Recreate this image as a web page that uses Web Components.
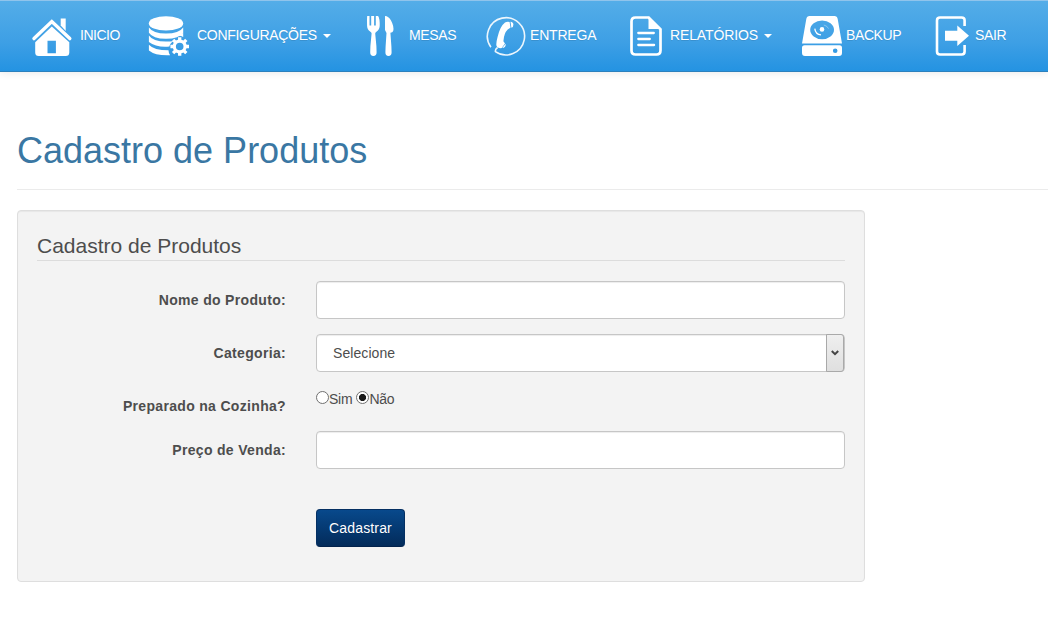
<!DOCTYPE html>
<html lang="pt-BR">
<head>
<meta charset="utf-8">
<title>Cadastro de Produtos</title>
<style>
    body {
        margin: 0;
        background: #fff;
        color: #4d4d4d;
        font: 14px/20px "Liberation Sans", Arial, sans-serif;
        overflow: hidden;
    }
</style>
</head>
<body>
<app-navbar>
    <nav-item icon="home" style="--gap: 8px; --w: 116px; --track: -.5px">INICIO</nav-item>
    <nav-item icon="database" caret style="--gap: 9px; --w: 212px; --track: -.3px">CONFIGURAÇÕES</nav-item>
    <nav-item icon="cutlery" style="--gap: 9px; --w: 126px; --track: -.35px">MESAS</nav-item>
    <nav-item icon="phone" style="--gap: 4px; --w: 140px; --track: -.2px">ENTREGA</nav-item>
    <nav-item icon="report" caret style="--gap: 4px; --w: 176px; --track: -.12px">RELATÓRIOS</nav-item>
    <nav-item icon="disk" style="--gap: 4px; --w: 129px; --track: -.4px">BACKUP</nav-item>
    <nav-item icon="exit" style="--gap: 4px; --w: 80px; --track: -.35px">SAIR</nav-item>
</app-navbar>
<page-header>Cadastro de Produtos</page-header>
<form-panel>
    <span slot="legend">Cadastro de Produtos</span>
    <form-row label="Nome do Produto:"><text-field></text-field></form-row>
    <form-row label="Categoria:"><select-field value="Selecione"></select-field></form-row>
    <form-row label="Preparado na Cozinha?">
        <radio-option>Sim</radio-option><radio-option checked>Não</radio-option>
    </form-row>
    <form-row label="Preço de Venda:"><text-field></text-field></form-row>
    <submit-button slot="actions">Cadastrar</submit-button>
</form-panel>

<script>
const icons = {
    home: `
        <path d="M28.7 9.5V2.6h5V15z"/>
        <path d="M2 22.6 19.8 5.6l18 17" fill="none" stroke="#fff" stroke-width="3.4" stroke-linecap="round"/>
        <path fill-rule="evenodd" d="M19.8 10.6 3.2 26.2v10.3q0 3.5 3.5 3.5h27q3.6 0 3.6-3.5V26.2zM15.5 24.8h8.4v12.4h-8.4z"/>`,
    database: `
        <ellipse cx="18" cy="7.4" rx="17.2" ry="7.2"/>
        <path d="M.9 11.5q4 6 17.1 6t17.2-6v5.2q-4 6-17.2 6t-17.1-6z"/>
        <path d="M.9 19.6q4 6 17.1 6 4.4 0 8-.7-4.2 2-4.6 5.6-13 1.2-20.5-4.5z"/>
        <path d="M.9 28.7q5 5.6 19.6 5.6.2 3.6 1.6 5Q7.5 39.9.9 34.5z"/>
        <path d="M29 19.8q3.5-1 6.2-3.1v4.2q-2-1.3-6.2-1.1z"/>
        <circle cx="31.7" cy="30.5" r="5.4" fill="none" stroke="#fff" stroke-width="3.2"/>
        <g stroke="#fff" stroke-width="3.3">
            <path d="M31.7 21.2v3.5M31.7 36.3v3.5M22.4 30.5h3.5M37.5 30.5H41M25.1 23.9l2.5 2.5M35.8 34.6l2.5 2.5M25.1 37.1l2.5-2.5M35.8 26.4l2.5-2.5"/>
        </g>`,
    cutlery: `
        <path d="M7.2 0h2.3v9.5h1.7V0h2.9v9.5h1.7V0h2.3q1.8 2.5 1.6 10-.3 4-3 5.4-1.5.8-1.5 2l1.2 12.6.2 6.2q0 3.8-3.2 3.8t-3.2-3.8l.2-6.2 1.2-12.6q0-1.2-1.5-2-2.8-1.4-3-5.4-.2-7.5.1-10z"/>
        <path d="M25 0q3.5 0 6 4.5 3.3 6 2.2 10.6-.6 1.7-2.8 1.7l1 13.7.2 5.7q0 3.8-3.1 3.8t-3.1-3.8l.2-5.7L26.5 17 25 14z"/>`,
    phone: `
        <path d="M4.9 31.2A18.6 18.6 0 1 1 9.4 35.6Q9 33.2 11.6 31.5" fill="none" stroke="#fff" stroke-width="1.6" stroke-opacity=".9"/>
        <path d="M19 6.4q2.2-1.2 4.6-.5l.9 5.6-2.8 2.1q-3.7 3.6-4.3 11.6l1.6 2.3-3.3 4.6q-4.4.4-5.3-2.6-.4-2.7 1.1-8.2 2.4-11 7.5-14.9z"/>
        <path d="M24.5 5.7q2.9.4 2.9 2.8 0 2.8-2 3.2zM19.6 27.8q.6 3.7-3.4 4.3z"/>`,
    report: `
        <path d="M22.7 1.5H9.5q-4 0-4 4v29q0 4 4 4h21q4 0 4-4V13.3z" fill="none" stroke="#fff" stroke-width="2.7"/>
        <path d="M22.5.6V13h12.8z"/>
        <path d="M12.3 17h15.5M12.3 23h11.5M12.3 29h15.8" stroke="#fff" stroke-width="2.3" stroke-linecap="round"/>`,
    disk: `
        <path fill-rule="evenodd" d="M7.6 0h24.8q2.8 0 3.3 3L40 27.6H0L4.3 3Q4.8 0 7.6 0zM8.2 13.8a11.9 9.4 0 1 0 23.8 0a11.9 9.4 0 1 0-23.8 0z"/>
        <circle cx="20" cy="13.4" r="2.3"/>
        <path d="M12.8 12.6q.6 5.6 6.2 6.3" fill="none" stroke="#fff" stroke-width="1.3"/>
        <path d="M21.8 9q3.6.8 4.7 3.6" fill="none" stroke="#fff" stroke-width="1" opacity=".35"/>
        <path fill-rule="evenodd" d="M2.5 29.3h35q2.5 0 2.5 2.5v5q0 3.2-3 3.2H3q-3 0-3-3.2v-5q0-2.5 2.5-2.5zM30.9 34.7a2.3 2.3 0 1 0 4.6 0a2.3 2.3 0 1 0-4.6 0z"/>`,
    exit: `
        <path d="M33.6 10V4.5q0-3-3-3H9q-3 0-3 3v31q0 3 3 3h21.6q3 0 3-3V29" fill="none" stroke="#fff" stroke-width="2.6"/>
        <path d="M14 14.7h12.3V9.5L38 19.8 26.3 30v-5.2H14z"/>`
};

class AppNavbar extends HTMLElement {
    constructor() {
        super();
        this.attachShadow({ mode: 'open' });
        this.shadowRoot.innerHTML = `
            <style>
                :host {
                    display: block;
                    box-sizing: border-box;
                    height: 72px;
                    border-top: 1px solid #90c4ec;
                    border-bottom: 1px solid #2b80bd;
                    background: linear-gradient(#54ade8, #3d9fe5 60%, #2493e2);
                    box-shadow: 0 1px 8px rgba(0, 0, 0, .09);
                }
                nav {
                    display: flex;
                    padding: 15px 0 0 32px;
                }
            </style>
            <nav><slot></slot></nav>
        `;
    }
}

class NavItem extends HTMLElement {
    constructor() {
        super();
        this.attachShadow({ mode: 'open' });
    }

    connectedCallback() {
        this.shadowRoot.innerHTML = `
            <style>
                :host {
                    display: block;
                    flex: none;
                    width: var(--w);
                    color: #fff;
                }
                a {
                    display: flex;
                    align-items: flex-start;
                    white-space: nowrap;
                }
                svg {
                    flex: none;
                    width: 40px;
                    height: 40px;
                    margin-right: var(--gap);
                    overflow: visible;
                }
                .label {
                    margin-top: 9px;
                    letter-spacing: var(--track);
                    text-shadow: 0 1px 0 rgba(0, 0, 0, .1);
                }
                .caret {
                    margin: 18px 0 0 6px;
                    border: 4px solid transparent;
                    border-top-color: #fff;
                    border-bottom: 0;
                }
            </style>
            <a>
                <svg viewBox="0 0 40 40" fill="#fff">${icons[this.getAttribute('icon')]}</svg>
                <span class="label"><slot></slot></span>
                ${this.hasAttribute('caret') ? '<span class="caret"></span>' : ''}
            </a>
        `;
    }
}

class PageHeader extends HTMLElement {
    constructor() {
        super();
        this.attachShadow({ mode: 'open' });
        this.shadowRoot.innerHTML = `
            <style>
                :host {
                    display: block;
                    margin: 59px 0 20px 17px;
                    padding-bottom: 18px;
                    border-bottom: 1px solid #ebebeb;
                }
                h1 {
                    margin: 0;
                    color: #3a77a3;
                    font-size: 36px;
                    font-weight: 400;
                    line-height: 40px;
                }
            </style>
            <h1><slot></slot></h1>
        `;
    }
}

class FormPanel extends HTMLElement {
    constructor() {
        super();
        this.attachShadow({ mode: 'open' });
        this.shadowRoot.innerHTML = `
            <style>
                :host {
                    display: block;
                    box-sizing: border-box;
                    width: 848px;
                    height: 372px;
                    margin-left: 17px;
                    padding: 19px;
                    border: 1px solid #dedede;
                    border-radius: 4px;
                    background: #f3f3f3;
                    box-shadow: inset 0 1px 1px rgba(0, 0, 0, .05);
                }
                .legend {
                    box-sizing: border-box;
                    height: 31px;
                    margin-bottom: 20px;
                    border-bottom: 1px solid #dcdcdc;
                    font-size: 21px;
                    line-height: 32px;
                }
                .rows {
                    display: grid;
                    gap: 15px;
                }
                .actions {
                    margin: 40px 0 0 279px;
                }
            </style>
            <div class="legend"><slot name="legend"></slot></div>
            <div class="rows"><slot></slot></div>
            <div class="actions"><slot name="actions"></slot></div>
        `;
    }
}

class FormRow extends HTMLElement {
    constructor() {
        super();
        this.attachShadow({ mode: 'open' });
    }

    connectedCallback() {
        this.shadowRoot.innerHTML = `
            <style>
                :host {
                    display: grid;
                    grid-template-columns: 249px 1fr;
                    column-gap: 30px;
                }
                label {
                    padding-top: 9px;
                    font-weight: 700;
                    letter-spacing: .32px;
                    text-align: right;
                }
            </style>
            <label>${this.getAttribute('label')}</label>
            <div><slot></slot></div>
        `;
    }
}

class TextField extends HTMLElement {
    constructor() {
        super();
        this.attachShadow({ mode: 'open' });
        this.shadowRoot.innerHTML = `
            <style>
                :host { display: block; }
                input {
                    display: block;
                    box-sizing: border-box;
                    width: 100%;
                    height: 38px;
                    padding: 8px 12px;
                    border: 1px solid #c6c6c6;
                    border-radius: 4px;
                    background: #fff;
                    box-shadow: inset 0 1px 1px rgba(0, 0, 0, .075);
                    font: inherit;
                }
            </style>
            <input type="text">
        `;
    }
}

class SelectField extends HTMLElement {
    constructor() {
        super();
        this.attachShadow({ mode: 'open' });
    }

    connectedCallback() {
        this.shadowRoot.innerHTML = `
            <style>
                :host {
                    display: flex;
                    box-sizing: border-box;
                    height: 38px;
                    border: 1px solid #c6c6c6;
                    border-radius: 4px;
                    background: #fff;
                    box-shadow: inset 0 1px 1px rgba(0, 0, 0, .075);
                }
                .value {
                    flex: 1;
                    padding: 8px 16px;
                    letter-spacing: .08px;
                }
                .arrow {
                    display: grid;
                    place-items: center;
                    box-sizing: border-box;
                    width: 18px;
                    border: 1px solid #a9a9a9;
                    border-radius: 0 3px 3px 0;
                    background: linear-gradient(#efefef, #dfdfdf);
                    margin: -1px 0 -1px 0;
                }
            </style>
            <span class="value">${this.getAttribute('value')}</span>
            <span class="arrow">
                <svg width="8" height="6" viewBox="0 0 8 6"><path d="M.8 1 4 4.2 7.2 1" fill="none" stroke="#444" stroke-width="2"/></svg>
            </span>
        `;
    }
}

class RadioOption extends HTMLElement {
    constructor() {
        super();
        this.attachShadow({ mode: 'open' });
    }

    connectedCallback() {
        this.shadowRoot.innerHTML = `
            <style>
                :host {
                    display: inline-flex;
                    height: 20px;
                    margin-right: 4px;
                    vertical-align: top;
                }
                .dot {
                    box-sizing: border-box;
                    width: 13px;
                    height: 13px;
                    margin-top: 4px;
                    border: 1px solid #707070;
                    border-radius: 50%;
                    background: #fff;
                }
                :host([checked]) .dot {
                    background: radial-gradient(circle, #1a1a1a 3.2px, #fff 3.9px);
                }
                .text {
                    margin-top: 2px;
                    letter-spacing: -.25px;
                }
            </style>
            <span class="dot"></span><span class="text"><slot></slot></span>
        `;
    }
}

class SubmitButton extends HTMLElement {
    constructor() {
        super();
        this.attachShadow({ mode: 'open' });
        this.shadowRoot.innerHTML = `
            <style>
                :host { display: block; }
                button {
                    display: block;
                    box-sizing: border-box;
                    width: 89px;
                    height: 38px;
                    padding: 0;
                    border: 1px solid #042f62;
                    border-bottom-color: #02224c;
                    border-radius: 4px;
                    background: linear-gradient(#08498c, #053a73 50%, #032b5a);
                    color: #fff;
                    font: inherit;
                    letter-spacing: .15px;
                    text-shadow: 0 1px 0 rgba(0, 0, 0, .1);
                }
            </style>
            <button type="button"><slot></slot></button>
        `;
    }
}

customElements.define('app-navbar', AppNavbar);
customElements.define('nav-item', NavItem);
customElements.define('page-header', PageHeader);
customElements.define('form-panel', FormPanel);
customElements.define('form-row', FormRow);
customElements.define('text-field', TextField);
customElements.define('select-field', SelectField);
customElements.define('radio-option', RadioOption);
customElements.define('submit-button', SubmitButton);
</script>
</body>
</html>
